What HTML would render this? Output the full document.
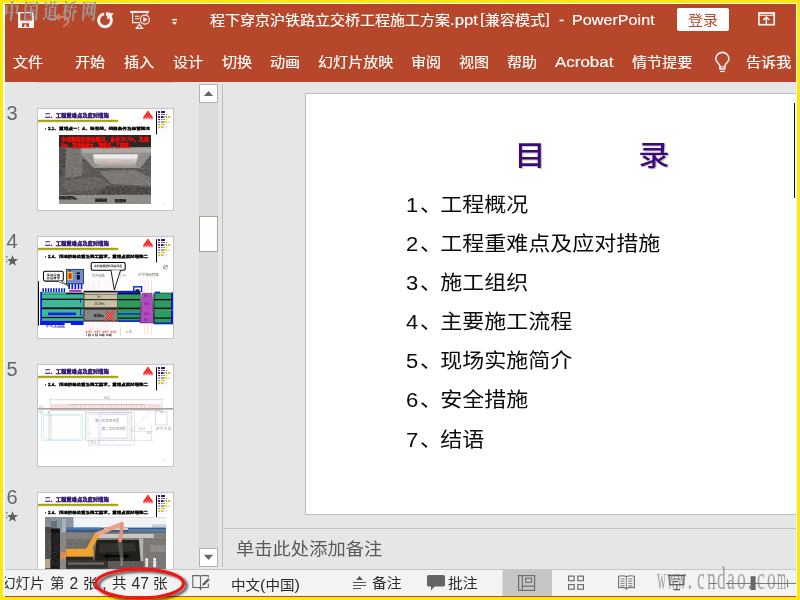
<!DOCTYPE html>
<html lang="zh-CN">
<head>
<meta charset="utf-8">
<title>PowerPoint</title>
<style>
*{box-sizing:border-box;margin:0;padding:0}
html,body{width:800px;height:600px;overflow:hidden;background:#fce80c}
body{position:relative;font-family:"Liberation Sans","Noto Sans CJK SC",sans-serif;color:#444}
#frame{position:absolute;left:3px;top:3px;width:794px;height:594px;background:#fff}
#win{position:absolute;left:5px;top:4px;width:791px;height:593px;background:#e6e6e6;overflow:hidden;will-change:transform}
#page{position:absolute;left:-5px;top:-4px;width:800px;height:600px}
#red{position:absolute;left:5px;top:4px;width:791px;height:78px;background:#b7472a}
.t{position:absolute;white-space:nowrap;line-height:1}
.yh{transform:scaleX(1.07);transform-origin:0 50%}
.w{color:#fff;-webkit-text-stroke:0.16px #fff}
.ti{top:13.4px;font-size:14.1px;transform:scaleX(1.064);transform-origin:0 50%}
.tab{top:54.5px;font-size:14.1px;transform:scaleX(1.07);transform-origin:0 50%}
#login{position:absolute;left:677px;top:8px;width:52px;height:23px;background:#fff;border-radius:2px}
svg{position:absolute;overflow:visible}
/* left panel */
.num{font-size:20px;color:#666;left:6.6px}
.thumb{position:absolute;left:37px;width:137px;height:103px;background:#fff;border:1px solid #c4c4c4;overflow:hidden}
#sb{position:absolute;left:199px;top:84px;width:19px;height:483px;background:#dcdcdc}
.sbtn{position:absolute;left:0;width:19px;height:19px;background:#fff;border:1px solid #b2b2b2}
#sthumb{position:absolute;left:0;top:132px;width:19px;height:36px;background:#fff;border:1px solid #a9a68b}
#vdiv{position:absolute;left:222px;top:84px;width:1px;height:483px;background:#bdbdbd}
/* slide */
#slide{position:absolute;left:305px;top:93px;width:500px;height:422px;background:#fff;border:1px solid #bdbdbd}
.ttl{font-weight:500;color:#3b0a78;font-size:30px;text-shadow:1.3px 1.3px 0.8px #c4c4c4;top:141px;transform:scale(1.05,0.96);transform-origin:50% 60%}
.li{font-size:22px;color:#0a0a0a;left:406px;font-weight:400;margin-top:2px;transform:scaleY(0.925);transform-origin:0 94%}
.li i{font-style:normal;position:relative;left:1.7px}
/* notes */
#ndiv{position:absolute;left:224px;top:528px;width:580px;height:1px;background:#c2c2c2}
#notes{left:236px;top:540.6px;font-size:17.2px;color:#5a5a5a;transform:scaleX(1.064);transform-origin:0 50%}
/* status bar */
#status{position:absolute;left:0;top:569px;width:800px;height:27px;background:#f3f3f3;border-top:1px solid #c6c6c6}
#sline{position:absolute;left:0;top:596px;width:800px;height:1px;background:#bd4a2b}
.st{font-size:13.6px;color:#2a2a2a;top:576.5px}
#stxt span{position:absolute;top:0;white-space:pre;transform:scaleX(1.07);transform-origin:0 50%}
#stxt .la{font-size:15.6px;top:-1px;transform:none}
#wm2{left:656.5px;top:573.1px;font-family:"Liberation Serif",serif;font-size:19px;color:rgba(105,105,105,0.58);transform:scaleY(1.62);transform-origin:0 83.7%}
#wm2 span{display:inline-block;width:10px;height:19px;vertical-align:top}
#wm2 b{display:inline-block;font-weight:normal;transform-origin:0 50%}
</style>
</head>
<body>
<div id="frame"></div>
<div id="win"><div id="page">
  <div id="red"></div>
  <!--TITLEBAR-->
  <svg id="qat" width="800" height="82" style="left:0;top:0" viewBox="0 0 800 82">
    <!-- save -->
    <rect x="18" y="12" width="16" height="16" rx="0.8" fill="#f3efee"/>
    <rect x="20.3" y="13.3" width="11.5" height="7.2" fill="#b7472a"/>
    <path d="M22 26.9V23.3H29V26.9H26.4V24.4H24.3V26.9Z" fill="#b7472a"/>
    <!-- undo (disabled) -->
    <path d="M54.3 17 L60 13.2 L60 15.9 L64 15.9 C68.5 16.2 70.2 19.2 69.2 22 C68.3 24.6 66 26.2 63.3 27.2 L62.8 25.6 C65 24.6 66.6 23.4 67 21.4 C67.3 19.4 66 18.3 63.8 18.2 L60 18.2 L60 20.8 Z" fill="#d57d68"/>
    <!-- redo / repeat -->
    <circle cx="105" cy="20.3" r="6.4" fill="none" stroke="#f6f2f1" stroke-width="3"/>
    <rect x="104.2" y="11" width="1.8" height="8.2" fill="#b7472a"/>
    <path d="M106 12.1 L113.9 13.4 L107.7 19.7 Z" fill="#f6f2f1"/>
    <!-- slideshow from start -->
    <rect x="130.1" y="10.9" width="18.9" height="2" fill="#f6f2f1"/>
    <path d="M132.6 13V22.6H147V13" fill="none" stroke="#f6f2f1" stroke-width="1.2"/>
    <path d="M135 16.3H139.7M135 18.8H139.7" stroke="#f6f2f1" stroke-width="1.1" fill="none"/>
    <path d="M139.4 23.2 L135 29 H143.8 Z" fill="#f6f2f1"/>
    <path d="M139.4 25.2 L137.6 27.4 H141.2 Z" fill="#b7472a"/>
    <circle cx="144.9" cy="19.6" r="5.7" fill="#b7472a"/>
    <circle cx="144.9" cy="19.6" r="4.5" fill="none" stroke="#f6f2f1" stroke-width="1.1"/>
    <path d="M143.3 16.9 L147.6 19.6 L143.3 22.3 Z" fill="#f6f2f1"/>
    <!-- customise -->
    <rect x="172" y="18.9" width="5" height="1.5" fill="#f6f2f1"/>
    <path d="M172 21.9 H177 L174.5 25.1 Z" fill="#f6f2f1"/>
    <!-- ribbon display options -->
    <rect x="758.9" y="13.1" width="15.3" height="11.6" fill="none" stroke="#f6f2f1" stroke-width="1.7"/>
    <rect x="758.1" y="12.3" width="16.9" height="3.5" fill="#f6f2f1"/>
    <rect x="760.2" y="13.9" width="12.7" height="0.8" fill="#b7472a"/>
    <path d="M766.3 24.6V17.6M763.3 20.1L766.3 17L769.3 20.1" fill="none" stroke="#f6f2f1" stroke-width="1.5"/>
    <!-- tell me lightbulb -->
    <path d="M719.9 66.4 C719.9 63.4 715.8 62.5 715.8 58.9 A6.55 6.55 0 0 1 728.9 58.9 C728.9 62.5 724.8 63.4 724.8 66.4" fill="none" stroke="#f8f4f3" stroke-width="1.6"/>
    <rect x="719.1" y="66.2" width="6.5" height="3.4" fill="#f8f4f3"/>
    <rect x="721" y="67.3" width="2.9" height="0.8" fill="#b7472a"/>
    <rect x="720.1" y="70.7" width="4.6" height="1.4" fill="#f8f4f3"/>
  </svg>
  <div class="t w ti" style="left:210px">程下穿京沪铁路立交桥工程施工方案</div>
  <div class="t w" style="left:450.3px;top:12.5px;font-size:14.8px;transform:scaleX(1.13);transform-origin:0 50%">.ppt</div>
  <div class="t w" style="left:480.2px;top:12.4px;font-size:14.6px">[</div>
  <div class="t w ti" style="left:484.8px">兼容模式</div>
  <div class="t w" style="left:545.4px;top:12.4px;font-size:14.6px">]</div>
  <div class="t w" style="left:559px;top:11.5px;font-size:16px">-</div>
  <div class="t w" style="left:572.2px;top:12.5px;font-size:14.8px;transform:scaleX(1.092);transform-origin:0 50%">PowerPoint</div>
  <div id="login"></div>
  <div class="t yh" style="left:687.5px;top:12.5px;font-size:14.1px;color:#b7472a">登录</div>
  <!--TABS-->
  <div class="t w tab" style="left:12.5px">文件</div>
  <div class="t w tab" style="left:74.5px">开始</div>
  <div class="t w tab" style="left:124px">插入</div>
  <div class="t w tab" style="left:173px">设计</div>
  <div class="t w tab" style="left:222px">切换</div>
  <div class="t w tab" style="left:270px">动画</div>
  <div class="t w tab" style="left:318px">幻灯片放映</div>
  <div class="t w tab" style="left:411px">审阅</div>
  <div class="t w tab" style="left:459px">视图</div>
  <div class="t w tab" style="left:506.5px">帮助</div>
  <div class="t w" style="left:555.2px;top:54.1px;font-size:15px;transform:scaleX(1.13);transform-origin:0 50%">Acrobat</div>
  <div class="t w tab" style="left:632px">情节提要</div>
  <div class="t w tab" style="left:746px">告诉我</div>
  <!--LEFTPANEL-->
  <div style="position:absolute;left:37px;top:82px;width:137px;height:1px;background:#cdcdcd"></div>
  <div class="t num" style="top:103px">3</div>
  <div class="t num" style="top:231px">4</div>
  <div class="t num" style="top:359px">5</div>
  <div class="t num" style="top:487px">6</div>
  <div class="thumb" id="th3" style="top:108px"><!--T--><svg width="137" height="103" viewBox="0 0 137 103" style="left:-1px;top:-1px;font-family:&quot;Liberation Sans&quot;,&quot;Noto Sans CJK SC&quot;,sans-serif"><g class="hd">
      <text x="8.1" y="9.15" transform="translate(0 9.15) scale(1 0.84) translate(0 -9.15)" font-size="5.3" font-weight="bold" fill="#24086e" stroke="#24086e" stroke-width="0.32" textLength="63.6" lengthAdjust="spacingAndGlyphs">二、工程重难点及应对措施</text>
      <path d="M18 9.75H71.7" stroke="#2a0a78" stroke-width="0.3" opacity="0.4"/>
      <rect x="0" y="12.7" width="81.6" height="1.6" fill="#b9b9b0" opacity="0.8"/>
      <rect x="0" y="11.8" width="81" height="1.9" fill="#a9a100"/>
      <rect x="8" y="20.1" width="1.1" height="1.3" fill="#3b1182"/>
      <text x="11" y="22.2" transform="translate(0 22.2) scale(1 0.86) translate(0 -22.2)" font-size="4.5" font-weight="bold" fill="#000" stroke="#000" stroke-width="0.3" textLength="102" lengthAdjust="spacingAndGlyphs">2.1、重难点一：A、既有线，线路条件及运营概况</text>
      <path d="M110.9 2.5 L116.2 9.8 H105.8 Z" fill="#ee1c1c"/>
      <path d="M109.3 6.2l1.4-1.6 1.4 1.6M108 8.6l1.4-1.5 1.5 1.5 1.5-1.5 1.4 1.5" stroke="#fff" stroke-width="0.45" fill="none" opacity="0.75"/>
      <path d="M106.2 10.7h2M108.8 10.7h2M111.4 10.7h2M114 10.7h2" stroke="#f04a4a" stroke-width="1.1"/>
      <rect x="119" y="3.2" width="1" height="23.2" fill="#000"/>
      <rect x="121.1" y="3.0" width="1.9" height="2" fill="#3b1182"/><rect x="124.0" y="3.0" width="4" height="2" fill="#3b1182"/><rect x="121.1" y="6.1" width="1.9" height="0.9" fill="#4a3a50"/><rect x="124.0" y="6.1" width="1.3" height="0.9" fill="#6a6420"/><rect x="125.3" y="6.1" width="1.4" height="0.9" fill="#3b1182"/><rect x="126.7" y="6.1" width="1.3" height="0.9" fill="#6a6420"/><rect x="129.0" y="6.1" width="1.2" height="0.9" fill="#8a9bb2"/><rect x="121.1" y="8.0" width="1.9" height="2" fill="#3b1182"/><rect x="124.0" y="8.0" width="2" height="2" fill="#3b1182"/><rect x="126.0" y="8.0" width="2" height="2" fill="#8a9bb2"/><rect x="129.0" y="8.0" width="1.2" height="2" fill="#8a9bb2"/><rect x="131.0" y="8.0" width="2.2" height="2" fill="#d6ca08"/><rect x="121.1" y="11.0" width="1.9" height="1" fill="#3b1182"/><rect x="124.0" y="11.0" width="4" height="1" fill="#8a9bb2"/><rect x="129.0" y="11.0" width="1.2" height="1" fill="#d6ca08"/><rect x="121.1" y="13.0" width="1.9" height="2" fill="#8a9bb2"/><rect x="124.0" y="13.0" width="2" height="2" fill="#8a9bb2"/><rect x="126.0" y="13.0" width="2" height="2" fill="#d6ca08"/><rect x="129.0" y="13.0" width="1.2" height="2" fill="#d6ca08"/><rect x="131.0" y="13.0" width="2.2" height="2" fill="#dfe0f7"/><rect x="121.1" y="16.0" width="1.9" height="1" fill="#8a9bb2"/><rect x="124.0" y="16.0" width="4" height="1" fill="#d6ca08"/><rect x="129.0" y="16.0" width="1.2" height="1" fill="#eee"/><rect x="121.1" y="18.0" width="1.9" height="2" fill="#d6ca08"/><rect x="124.0" y="18.0" width="2" height="2" fill="#d6ca08"/><rect x="126.0" y="18.0" width="2" height="2" fill="#dfe0f7"/><rect x="129.0" y="18.0" width="1.2" height="2" fill="#dfe0f7"/><rect x="124.0" y="21.0" width="2.4" height="0.8" fill="#dfe0f7"/><rect x="129.0" y="21.0" width="1.2" height="0.8" fill="#e4e4e4"/>
    </g>
  <defs>
    <linearGradient id="g3a" x1="0" y1="0" x2="0" y2="1"><stop offset="0" stop-color="#2e2a27"/><stop offset="0.18" stop-color="#3b3733"/><stop offset="0.45" stop-color="#56524e"/><stop offset="0.8" stop-color="#4c4945"/><stop offset="0.9" stop-color="#7b7874"/><stop offset="1" stop-color="#8d8a86"/></linearGradient>
    <linearGradient id="g3b" x1="0" y1="0" x2="0" y2="1"><stop offset="0" stop-color="#e4e4e2"/><stop offset="0.5" stop-color="#c9c6c2"/><stop offset="1" stop-color="#8f8a86"/></linearGradient>
    <filter id="n3" x="0" y="0" width="100%" height="100%"><feTurbulence type="fractalNoise" baseFrequency="0.35 0.5" numOctaves="2" seed="4"/><feColorMatrix values="0 0 0 0 0.5  0 0 0 0 0.5  0 0 0 0 0.5  0.9 0.9 0.9 0 -0.95"/><feComposite in2="SourceGraphic" operator="in"/></filter>
  </defs>
  <rect x="22" y="27" width="92" height="68.8" fill="url(#g3a)"/>
  <rect x="22" y="27" width="92" height="12" fill="#2d2824"/>
  <path d="M22 39 L46 41 L45 68 L22 71 Z" fill="#6f6b67"/>
  <path d="M22 39 L29 39.5 L28 69 L22 71 Z" fill="#45413d"/>
  <path d="M43 39.5 L114 39 L114 47 L103 60 L57 60 L45 48 Z" fill="#8d8a86"/>
  <path d="M45 40.6 L114 40.2 L114 44.4 L45 45 Z" fill="#a9a6a2"/>
  <path d="M55.7 46.4 L101.4 46.4 L98 59.8 L58.6 59.8 Z" fill="url(#g3b)"/>
  <path d="M57 46.6 L100.4 46.6 L99.6 50.6 L57.8 50.6 Z" fill="#f2f2f0"/>
  <path d="M60 53.5h9l3 1.6h10l6-2.6h7" stroke="#e0a8a0" stroke-width="1.2" fill="none" opacity="0.85"/>
  <path d="M58 60 L99 60 L114 68 L114 87 L22 87 L22 71 L45 68 Z" fill="#4f4c48"/>
  <path d="M62 63 L98 62 L114 70 L114 78 L74 76 Z" fill="#777470" opacity="0.9"/>
  <path d="M24 73 L58 68 L78 79 L30 84 Z" fill="#5f5c58" opacity="0.9"/>
  <path d="M70 78 L114 80 L114 86 L60 86 Z" fill="#3c3936" opacity="0.9"/>
  <rect x="22" y="87" width="92" height="8.8" fill="#8b8884"/>
  <path d="M22 88 h14 l5 3.4 h-19z M58 90.4h12v3.6H58z M78 91h11v3.4H78z" fill="#24211e"/>
  <rect x="22" y="39" width="92" height="56.8" fill="#fff" filter="url(#n3)" opacity="0.3"/>
  <rect x="58.2" y="56.2" width="1.6" height="1.6" fill="#2a8cc0"/>
  <text x="24.3" y="33.4" font-size="4.6" font-weight="bold" fill="#ff0a0a" stroke="#ff0a0a" stroke-width="0.3" textLength="87.5" lengthAdjust="spacingAndGlyphs">中线里程及桥位概况，全长38.7m，孔径</text>
  <text x="24.3" y="39.4" font-size="4.6" font-weight="bold" fill="#ff0a0a" stroke="#ff0a0a" stroke-width="0.3" textLength="72" lengthAdjust="spacingAndGlyphs">8m，顶进重量大，顶程长，工期紧。</text>
  <text x="126" y="96" font-size="1.8" fill="#888">3</text>
</svg><!--/T--></div>
  <div class="thumb" id="th4" style="top:236px"><!--T--><svg width="137" height="103" viewBox="0 0 137 103" style="left:-1px;top:-1px;font-family:&quot;Liberation Sans&quot;,&quot;Noto Sans CJK SC&quot;,sans-serif"><g class="hd">
      <text x="8.1" y="9.15" transform="translate(0 9.15) scale(1 0.84) translate(0 -9.15)" font-size="5.3" font-weight="bold" fill="#24086e" stroke="#24086e" stroke-width="0.32" textLength="63.6" lengthAdjust="spacingAndGlyphs">二、工程重难点及应对措施</text>
      <path d="M18 9.75H71.7" stroke="#2a0a78" stroke-width="0.3" opacity="0.4"/>
      <rect x="0" y="12.7" width="81.6" height="1.6" fill="#b9b9b0" opacity="0.8"/>
      <rect x="0" y="11.8" width="81" height="1.9" fill="#a9a100"/>
      <rect x="8" y="20.1" width="1.1" height="1.3" fill="#3b1182"/>
      <text x="11" y="22.2" transform="translate(0 22.2) scale(1 0.86) translate(0 -22.2)" font-size="4.5" font-weight="bold" fill="#000" stroke="#000" stroke-width="0.3" textLength="100" lengthAdjust="spacingAndGlyphs">2.4、顶进桥涵位置及施工要求，重难点应对措施二</text>
      <path d="M110.9 2.5 L116.2 9.8 H105.8 Z" fill="#ee1c1c"/>
      <path d="M109.3 6.2l1.4-1.6 1.4 1.6M108 8.6l1.4-1.5 1.5 1.5 1.5-1.5 1.4 1.5" stroke="#fff" stroke-width="0.45" fill="none" opacity="0.75"/>
      <path d="M106.2 10.7h2M108.8 10.7h2M111.4 10.7h2M114 10.7h2" stroke="#f04a4a" stroke-width="1.1"/>
      <rect x="119" y="3.2" width="1" height="23.2" fill="#000"/>
      <rect x="121.1" y="3.0" width="1.9" height="2" fill="#3b1182"/><rect x="124.0" y="3.0" width="4" height="2" fill="#3b1182"/><rect x="121.1" y="6.1" width="1.9" height="0.9" fill="#4a3a50"/><rect x="124.0" y="6.1" width="1.3" height="0.9" fill="#6a6420"/><rect x="125.3" y="6.1" width="1.4" height="0.9" fill="#3b1182"/><rect x="126.7" y="6.1" width="1.3" height="0.9" fill="#6a6420"/><rect x="129.0" y="6.1" width="1.2" height="0.9" fill="#8a9bb2"/><rect x="121.1" y="8.0" width="1.9" height="2" fill="#3b1182"/><rect x="124.0" y="8.0" width="2" height="2" fill="#3b1182"/><rect x="126.0" y="8.0" width="2" height="2" fill="#8a9bb2"/><rect x="129.0" y="8.0" width="1.2" height="2" fill="#8a9bb2"/><rect x="131.0" y="8.0" width="2.2" height="2" fill="#d6ca08"/><rect x="121.1" y="11.0" width="1.9" height="1" fill="#3b1182"/><rect x="124.0" y="11.0" width="4" height="1" fill="#8a9bb2"/><rect x="129.0" y="11.0" width="1.2" height="1" fill="#d6ca08"/><rect x="121.1" y="13.0" width="1.9" height="2" fill="#8a9bb2"/><rect x="124.0" y="13.0" width="2" height="2" fill="#8a9bb2"/><rect x="126.0" y="13.0" width="2" height="2" fill="#d6ca08"/><rect x="129.0" y="13.0" width="1.2" height="2" fill="#d6ca08"/><rect x="131.0" y="13.0" width="2.2" height="2" fill="#dfe0f7"/><rect x="121.1" y="16.0" width="1.9" height="1" fill="#8a9bb2"/><rect x="124.0" y="16.0" width="4" height="1" fill="#d6ca08"/><rect x="129.0" y="16.0" width="1.2" height="1" fill="#eee"/><rect x="121.1" y="18.0" width="1.9" height="2" fill="#d6ca08"/><rect x="124.0" y="18.0" width="2" height="2" fill="#d6ca08"/><rect x="126.0" y="18.0" width="2" height="2" fill="#dfe0f7"/><rect x="129.0" y="18.0" width="1.2" height="2" fill="#dfe0f7"/><rect x="124.0" y="21.0" width="2.4" height="0.8" fill="#dfe0f7"/><rect x="129.0" y="21.0" width="1.2" height="0.8" fill="#e4e4e4"/>
    </g><path d="M49.0 45V54.5 M49.0 86.5V94.5" stroke="#f7c4de" stroke-width="0.4"/>
<path d="M51.5 45V54.5 M51.5 86.5V94.5" stroke="#f7c4de" stroke-width="0.4"/>
<path d="M54.0 45V54.5 M54.0 86.5V94.5" stroke="#f7c4de" stroke-width="0.4"/>
<path d="M56.5 45V54.5 M56.5 86.5V94.5" stroke="#f7c4de" stroke-width="0.4"/>
<path d="M59.0 45V54.5 M59.0 86.5V94.5" stroke="#f7c4de" stroke-width="0.4"/>
<path d="M61.5 45V54.5 M61.5 86.5V94.5" stroke="#f7c4de" stroke-width="0.4"/>
<path d="M64.0 45V54.5 M64.0 86.5V94.5" stroke="#f7c4de" stroke-width="0.4"/>
<path d="M67.0 45V54.5 M67.0 86.5V94.5" stroke="#f7c4de" stroke-width="0.4"/>
<path d="M70.0 45V54.5 M70.0 86.5V94.5" stroke="#f7c4de" stroke-width="0.4"/>
<path d="M73.0 45V54.5 M73.0 86.5V94.5" stroke="#f7c4de" stroke-width="0.4"/>
<path d="M108.0 44V56 M108.0 87.5V99" stroke="#f2a6a6" stroke-width="0.4"/>
<path d="M111.0 44V56 M111.0 87.5V99" stroke="#f2a6a6" stroke-width="0.4"/>
<path d="M114.5 44V56 M114.5 87.5V99" stroke="#f2a6a6" stroke-width="0.4"/>
<path d="M83.5 30V42 M83.5 91V100" stroke="#bbb" stroke-width="0.5"/>
<rect x="1.0" y="45.2" width="1.0" height="44.4" fill="#000" />
<rect x="3.2" y="56.0" width="2.0" height="33.0" fill="#0a1cf2" />
<rect x="5.4" y="52.2" width="1.5" height="4.2" fill="#0a1cf2" />
<rect x="8.0" y="52.2" width="1.5" height="4.2" fill="#0a1cf2" />
<rect x="10.7" y="52.2" width="1.5" height="4.2" fill="#0a1cf2" />
<rect x="13.3" y="52.2" width="1.5" height="4.2" fill="#0a1cf2" />
<rect x="16.0" y="52.2" width="1.5" height="4.2" fill="#0a1cf2" />
<rect x="18.6" y="52.2" width="1.5" height="4.2" fill="#0a1cf2" />
<rect x="21.3" y="52.2" width="1.5" height="4.2" fill="#0a1cf2" />
<rect x="24.0" y="52.2" width="1.5" height="4.2" fill="#0a1cf2" />
<rect x="26.6" y="52.2" width="1.5" height="4.2" fill="#0a1cf2" />
<rect x="31.3" y="47.7" width="1.7" height="5.3" fill="#0a1cf2" />
<rect x="34.4" y="47.7" width="1.7" height="5.3" fill="#0a1cf2" />
<rect x="37.5" y="47.7" width="1.7" height="5.3" fill="#0a1cf2" />
<rect x="40.6" y="47.7" width="1.7" height="5.3" fill="#0a1cf2" />
<rect x="43.7" y="47.7" width="1.7" height="5.3" fill="#0a1cf2" />
<rect x="3.2" y="85.0" width="43.4" height="4.0" fill="#0a1cf2" />
<rect x="27.6" y="87.0" width="6.2" height="2.2" fill="#fff" />
<rect x="5.0" y="56.6" width="41.6" height="28.6" fill="#101010" />
<rect x="5.0" y="58.3" width="41.6" height="4.3" fill="#3fb79b" />
<rect x="5.0" y="64.0" width="41.6" height="7.4" fill="#3fb79b" />
<rect x="5.0" y="73.2" width="41.6" height="7.7" fill="#3fb79b" />
<rect x="5.0" y="82.2" width="41.6" height="2.7" fill="#3fb79b" />
<rect x="11.0" y="76.6" width="28.0" height="2.6" fill="#0a1cf2" />
<rect x="5.0" y="56.4" width="24.0" height="1.9" fill="#3fb79b" />
<rect x="32.2" y="53.7" width="12.4" height="2.3" fill="#a546b4" />
<path d="M43.5 62V67M43.5 73V79h2" stroke="#0a1cf2" stroke-width="0.9" fill="none"/>
<rect x="29.4" y="33.3" width="17.2" height="14.5" fill="#6b8fd6" stroke="#111" stroke-width="0.7"/>
<rect x="30.5" y="36.0" width="5.2" height="8.0" fill="#f2d21a" />
<rect x="31.5" y="37.2" width="3.1" height="5.6" fill="#e02a1a" />
<rect x="39.7" y="36.4" width="3.3" height="1.6" fill="#111" />
<rect x="39.9" y="39.0" width="2.9" height="4.6" fill="#111" />
<rect x="31.5" y="34.4" width="2.5" height="0.8" fill="#111" />
<rect x="6.5" y="35.3" width="19.8" height="9.8" rx="1.8" fill="#fff" stroke="#000" stroke-width="1.05"/>
<path d="M20 45L33 50.5L24 45" fill="#fff" stroke="#111" stroke-width="0.6"/>
<text x="9.5" y="39.60000000000002" font-size="2.6" font-weight="bold" fill="#111" textLength="13.5" lengthAdjust="spacingAndGlyphs">顶进设备</text>
<text x="9.5" y="43.39999999999998" font-size="2.6" font-weight="bold" fill="#111" textLength="13.5" lengthAdjust="spacingAndGlyphs">及后背梁</text>
<rect x="54.2" y="26.4" width="34" height="7.9" rx="1.6" fill="#fff" stroke="#000" stroke-width="1.05"/>
<path d="M74 34.30000000000001L77.3 54L83.5 34.30000000000001" fill="#fff" stroke="#000" stroke-width="0.9"/>
<text x="57" y="31.19999999999999" font-size="2.7" font-weight="bold" fill="#111" textLength="28" lengthAdjust="spacingAndGlyphs">京沪线框架桥顶进位置</text>
<text x="54.7" y="40.69999999999999" font-size="3.2" fill="#777" textLength="13" lengthAdjust="spacingAndGlyphs">京沪线路</text>
<text x="101.30000000000001" y="40.30000000000001" font-size="3.2" fill="#666" textLength="20.4" lengthAdjust="spacingAndGlyphs">沪宁城际铁路</text>
<rect x="85" y="38.4" width="4.6" height="2" fill="#d6d6d6"/>
<text x="88.3" y="96.80000000000001" font-size="3.2" fill="#888">上海</text>
<circle cx="128.3" cy="31.19999999999999" r="2" fill="none" stroke="#555" stroke-width="0.5"/><path d="M126 32.19999999999999L131 29.19999999999999" stroke="#555" stroke-width="0.5"/>
<rect x="46.6" y="54.8" width="34.0" height="1.4" fill="#111" />
<rect x="46.6" y="56.2" width="34.0" height="29.4" fill="#2b2b2b" />
<rect x="47.4" y="58.4" width="32.8" height="4.6" fill="#c9c1a3" />
<rect x="47.4" y="64.2" width="32.8" height="7.1" fill="#c9c1a3" />
<rect x="47.4" y="73.6" width="32.8" height="10.8" fill="#868686" />
<rect x="47.4" y="56.6" width="32.8" height="1.2" fill="#e8e4d6" />
<text x="60" y="62.19999999999999" font-size="2.8" fill="#a33">8m</text>
<text x="57.5" y="69.39999999999998" font-size="3.3" fill="#333" textLength="10">16.78m</text>
<text x="56.5" y="81" font-size="3.6" font-weight="bold" fill="#111" textLength="10.5" lengthAdjust="spacingAndGlyphs">主体8m</text>
<path d="M68.6 75L77 85M77 75L68.6 85" stroke="#f01a10" stroke-width="2"/>
<path d="M68.6 75L77 85M77 75L68.6 85" stroke="#f7a090" stroke-width="0.7"/>
<rect x="80.6" y="54.8" width="23.0" height="2.2" fill="#0a1cf2" />
<rect x="80.6" y="57.0" width="23.0" height="29.0" fill="#101010" />
<rect x="81.0" y="58.4" width="22.2" height="4.6" fill="#2f9a62" />
<rect x="81.0" y="64.3" width="22.2" height="7.3" fill="#2f9a62" />
<rect x="81.0" y="73.2" width="22.2" height="8.3" fill="#2f9a62" />
<rect x="81.0" y="82.7" width="22.2" height="2.9" fill="#2f9a62" />
<rect x="81.0" y="77.3" width="22.2" height="1.3" fill="#0a1cf2" />
<rect x="81.0" y="84.3" width="22.2" height="1.3" fill="#0a1cf2" />
<path d="M96.80000000000001 55V50.80000000000001H104.6V56" stroke="#0a1cf2" stroke-width="1.4" fill="none"/>
<path d="M97.5 51.10000000000002H103" stroke="#2fb89a" stroke-width="0.6"/>
<rect x="98.5" y="53.3" width="4.0" height="2.3" fill="#222" />
<polygon points="105.0,57.2 115.0,57.2 117.2,86.9 103.0,86.9" fill="#b04cc0" stroke="#222" stroke-width="0.5"/>
<text x="107" y="61.39999999999998" font-size="2.7" fill="#5a1a70">8m</text>
<text x="107" y="68.60000000000002" font-size="2.7" fill="#5a1a70">16m</text>
<text x="107" y="78.60000000000002" font-size="2.7" fill="#5a1a70">16m</text>
<text x="107" y="85.39999999999998" font-size="2.7" fill="#5a1a70">8m</text>
<rect x="116.4" y="57.0" width="18.6" height="30.4" fill="#101010" />
<rect x="117.4" y="58.0" width="16.8" height="5.0" fill="#2f9a62" />
<rect x="117.4" y="64.3" width="16.8" height="7.3" fill="#2f9a62" />
<rect x="117.4" y="73.2" width="16.8" height="8.3" fill="#2f9a62" />
<rect x="117.4" y="82.7" width="16.8" height="3.9" fill="#2f9a62" />
<rect x="116.4" y="56.4" width="19.6" height="1.2" fill="#35b597" />
<rect x="118.0" y="55.6" width="5.0" height="1.4" fill="#0a1cf2" />
<rect x="134.6" y="56.4" width="1.4" height="31.6" fill="#0a1cf2" />
<rect x="117.0" y="87.0" width="19.0" height="1.3" fill="#0a1cf2" />
<rect x="117.0" y="73.6" width="19.0" height="0.7" fill="#35b597" />
<text x="8.899999999999999" y="90.89999999999998" font-size="3.1" font-weight="bold" fill="#1616c8" textLength="19" lengthAdjust="spacingAndGlyphs">沪宁工务段</text>
<path d="M15 91.30000000000001H28" stroke="#1616c8" stroke-width="0.4"/>
<text x="47.900000000000006" y="97" font-size="2.4" font-weight="bold" fill="#d22" textLength="32" lengthAdjust="spacingAndGlyphs">上行 下行 上行  下行</text>
<text x="47.900000000000006" y="99.80000000000001" font-size="2.4" font-weight="bold" fill="#222" textLength="27" lengthAdjust="spacingAndGlyphs">Ⅰ线 Ⅱ线 Ⅲ线  Ⅳ线</text>
<text x="126" y="95.5" font-size="1.8" fill="#888">4</text></svg><!--/T--></div>
  <div class="thumb" id="th5" style="top:364px"><!--T--><svg width="137" height="103" viewBox="0 0 137 103" style="left:-1px;top:-1px;font-family:&quot;Liberation Sans&quot;,&quot;Noto Sans CJK SC&quot;,sans-serif"><g class="hd">
      <text x="8.1" y="9.15" transform="translate(0 9.15) scale(1 0.84) translate(0 -9.15)" font-size="5.3" font-weight="bold" fill="#24086e" stroke="#24086e" stroke-width="0.32" textLength="63.6" lengthAdjust="spacingAndGlyphs">二、工程重难点及应对措施</text>
      <path d="M18 9.75H71.7" stroke="#2a0a78" stroke-width="0.3" opacity="0.4"/>
      <rect x="0" y="12.7" width="81.6" height="1.6" fill="#b9b9b0" opacity="0.8"/>
      <rect x="0" y="11.8" width="81" height="1.9" fill="#a9a100"/>
      <rect x="8" y="20.1" width="1.1" height="1.3" fill="#3b1182"/>
      <text x="11" y="22.2" transform="translate(0 22.2) scale(1 0.86) translate(0 -22.2)" font-size="4.5" font-weight="bold" fill="#000" stroke="#000" stroke-width="0.3" textLength="100" lengthAdjust="spacingAndGlyphs">2.4、顶进桥涵位置及施工要求，重难点应对措施二</text>
      <path d="M110.9 2.5 L116.2 9.8 H105.8 Z" fill="#ee1c1c"/>
      <path d="M109.3 6.2l1.4-1.6 1.4 1.6M108 8.6l1.4-1.5 1.5 1.5 1.5-1.5 1.4 1.5" stroke="#fff" stroke-width="0.45" fill="none" opacity="0.75"/>
      <path d="M106.2 10.7h2M108.8 10.7h2M111.4 10.7h2M114 10.7h2" stroke="#f04a4a" stroke-width="1.1"/>
      <rect x="119" y="3.2" width="1" height="23.2" fill="#000"/>
      <rect x="121.1" y="3.0" width="1.9" height="2" fill="#3b1182"/><rect x="124.0" y="3.0" width="4" height="2" fill="#3b1182"/><rect x="121.1" y="6.1" width="1.9" height="0.9" fill="#4a3a50"/><rect x="124.0" y="6.1" width="1.3" height="0.9" fill="#6a6420"/><rect x="125.3" y="6.1" width="1.4" height="0.9" fill="#3b1182"/><rect x="126.7" y="6.1" width="1.3" height="0.9" fill="#6a6420"/><rect x="129.0" y="6.1" width="1.2" height="0.9" fill="#8a9bb2"/><rect x="121.1" y="8.0" width="1.9" height="2" fill="#3b1182"/><rect x="124.0" y="8.0" width="2" height="2" fill="#3b1182"/><rect x="126.0" y="8.0" width="2" height="2" fill="#8a9bb2"/><rect x="129.0" y="8.0" width="1.2" height="2" fill="#8a9bb2"/><rect x="131.0" y="8.0" width="2.2" height="2" fill="#d6ca08"/><rect x="121.1" y="11.0" width="1.9" height="1" fill="#3b1182"/><rect x="124.0" y="11.0" width="4" height="1" fill="#8a9bb2"/><rect x="129.0" y="11.0" width="1.2" height="1" fill="#d6ca08"/><rect x="121.1" y="13.0" width="1.9" height="2" fill="#8a9bb2"/><rect x="124.0" y="13.0" width="2" height="2" fill="#8a9bb2"/><rect x="126.0" y="13.0" width="2" height="2" fill="#d6ca08"/><rect x="129.0" y="13.0" width="1.2" height="2" fill="#d6ca08"/><rect x="131.0" y="13.0" width="2.2" height="2" fill="#dfe0f7"/><rect x="121.1" y="16.0" width="1.9" height="1" fill="#8a9bb2"/><rect x="124.0" y="16.0" width="4" height="1" fill="#d6ca08"/><rect x="129.0" y="16.0" width="1.2" height="1" fill="#eee"/><rect x="121.1" y="18.0" width="1.9" height="2" fill="#d6ca08"/><rect x="124.0" y="18.0" width="2" height="2" fill="#d6ca08"/><rect x="126.0" y="18.0" width="2" height="2" fill="#dfe0f7"/><rect x="129.0" y="18.0" width="1.2" height="2" fill="#dfe0f7"/><rect x="124.0" y="21.0" width="2.4" height="0.8" fill="#dfe0f7"/><rect x="129.0" y="21.0" width="1.2" height="0.8" fill="#e4e4e4"/>
    </g><path d="M13.0 35.7H125 M13.0 33.5V40 M125.0 33.5V40" stroke="#b8b8b8" stroke-width="0.5" fill="none"/>
<text x="66.5" y="34.60000000000002" font-size="3" fill="#999">3400</text>
<rect x="13" y="40.9" width="112" height="5.6" fill="#fdf1f1" stroke="#c9b0b0" stroke-width="0.4"/>
<path d="M15.55 40.9V46.5M18.10 40.9V46.5M20.65 40.9V46.5M23.20 40.9V46.5M25.75 40.9V46.5M28.30 40.9V46.5M30.85 40.9V46.5M33.40 40.9V46.5M35.95 40.9V46.5M38.50 40.9V46.5M41.05 40.9V46.5M43.60 40.9V46.5M46.15 40.9V46.5M48.70 40.9V46.5M51.25 40.9V46.5M53.80 40.9V46.5M56.35 40.9V46.5M58.90 40.9V46.5M61.45 40.9V46.5M64.00 40.9V46.5M66.55 40.9V46.5M69.10 40.9V46.5M71.65 40.9V46.5M74.20 40.9V46.5M76.75 40.9V46.5M79.30 40.9V46.5M81.85 40.9V46.5M84.40 40.9V46.5M86.95 40.9V46.5M89.50 40.9V46.5M92.05 40.9V46.5M94.60 40.9V46.5M97.15 40.9V46.5M99.70 40.9V46.5M102.25 40.9V46.5M104.80 40.9V46.5M107.35 40.9V46.5M109.90 40.9V46.5M112.45 40.9V46.5M115.00 40.9V46.5M117.55 40.9V46.5M120.10 40.9V46.5M122.65 40.9V46.5" stroke="#f08a8a" stroke-width="0.45"/>
<rect x="0" y="44.1" width="137" height="1.5" fill="#9c9c9c"/>
<rect x="32" y="40.2" width="76" height="0.5" fill="#c4a0a0"/>
<path d="M12.0 46.6l1.8 2.6h-3.6z M125.0 46.6l1.8 2.6h-3.6z" fill="#c8c8c8"/>
<text x="2" y="44" font-size="2.2" fill="#aaa">轨顶</text>
<text x="2" y="49.19999999999999" font-size="2.2" fill="#aaa">地面</text>
<rect x="4.5" y="50.4" width="41.2" height="25.9" fill="none" stroke="#a5e3e3" stroke-width="0.5"/>
<path d="M6.5 52.0Q9.0 50.8 13.0 51.6H37Q42.0 50.8 44.0 52.6V73Q43.0 75.4 40.0 75.4H10Q6.5 75.4 6.5 73.0Z" fill="none" stroke="#b5e6e6" stroke-width="0.5"/>
<path d="M12.0 50.4V76.3M14.0 50.4V76.3" stroke="#b0b0b0" stroke-width="0.5"/>
<rect x="48.6" y="48.5" width="45.9" height="27.8" fill="none" stroke="#bdbdbd" stroke-width="1.3" stroke-dasharray="0.6 0.5"/>
<rect x="51" y="50.6" width="41.5" height="23.6" rx="2" fill="none" stroke="#d2d2d2" stroke-width="0.5"/>
<rect x="62" y="48.5" width="35.4" height="32.5" rx="1.2" fill="none" stroke="#b3baf2" stroke-width="0.5"/>
<rect x="64" y="50.4" width="26.7" height="24" rx="2.6" fill="none" stroke="#c3c9f5" stroke-width="0.5"/>
<text x="58" y="57.60000000000002" font-size="3.6" fill="#8c8c8c" textLength="24" lengthAdjust="spacingAndGlyphs">第一次顶进范围</text>
<text x="64.8" y="66.30000000000001" font-size="3.6" fill="#8c8c8c" textLength="24" lengthAdjust="spacingAndGlyphs">第二次顶进范围</text>
<text x="52.5" y="70.5" font-size="2.4" fill="#aaa" transform="rotate(-60 53.5 70)">45°</text>
<rect x="118.5" y="47.6" width="11.5" height="13.4" fill="none" stroke="#bcbcbc" stroke-width="0.5"/>
<text x="118.5" y="65.60000000000002" font-size="3.2" fill="#999" textLength="16" lengthAdjust="spacingAndGlyphs">沪宁大堤</text>
<path d="M94.5 67.0L113.0 47.0 M94.5 67.4H116 M114.6 61.0V76.5 M94.5 76.4H116 M51.4 76.4V82M61.6 76.4V82M51.4 81.3H61.599999999999994" stroke="#c6c6c6" stroke-width="0.45" fill="none"/>
<text x="102" y="66.39999999999998" font-size="2.6" fill="#aaa">552.5</text>
<text x="109.5" y="70.19999999999999" font-size="2.6" fill="#aaa">200</text>
<text x="53" y="80.39999999999998" font-size="2.6" fill="#aaa">393.5</text>
<text x="126" y="95.5" font-size="1.8" fill="#888">5</text></svg><!--/T--></div>
  <div class="thumb" id="th6" style="top:492px"><!--T--><svg width="137" height="103" viewBox="0 0 137 103" style="left:-1px;top:-1px;font-family:&quot;Liberation Sans&quot;,&quot;Noto Sans CJK SC&quot;,sans-serif"><g class="hd">
      <text x="8.1" y="9.15" transform="translate(0 9.15) scale(1 0.84) translate(0 -9.15)" font-size="5.3" font-weight="bold" fill="#24086e" stroke="#24086e" stroke-width="0.32" textLength="63.6" lengthAdjust="spacingAndGlyphs">二、工程重难点及应对措施</text>
      <path d="M18 9.75H71.7" stroke="#2a0a78" stroke-width="0.3" opacity="0.4"/>
      <rect x="0" y="12.7" width="81.6" height="1.6" fill="#b9b9b0" opacity="0.8"/>
      <rect x="0" y="11.8" width="81" height="1.9" fill="#a9a100"/>
      <rect x="8" y="20.1" width="1.1" height="1.3" fill="#3b1182"/>
      <text x="11" y="22.2" transform="translate(0 22.2) scale(1 0.86) translate(0 -22.2)" font-size="4.5" font-weight="bold" fill="#000" stroke="#000" stroke-width="0.3" textLength="100" lengthAdjust="spacingAndGlyphs">2.4、顶进桥涵位置及施工要求，重难点应对措施二</text>
      <path d="M110.9 2.5 L116.2 9.8 H105.8 Z" fill="#ee1c1c"/>
      <path d="M109.3 6.2l1.4-1.6 1.4 1.6M108 8.6l1.4-1.5 1.5 1.5 1.5-1.5 1.4 1.5" stroke="#fff" stroke-width="0.45" fill="none" opacity="0.75"/>
      <path d="M106.2 10.7h2M108.8 10.7h2M111.4 10.7h2M114 10.7h2" stroke="#f04a4a" stroke-width="1.1"/>
      <rect x="119" y="3.2" width="1" height="23.2" fill="#000"/>
      <rect x="121.1" y="3.0" width="1.9" height="2" fill="#3b1182"/><rect x="124.0" y="3.0" width="4" height="2" fill="#3b1182"/><rect x="121.1" y="6.1" width="1.9" height="0.9" fill="#4a3a50"/><rect x="124.0" y="6.1" width="1.3" height="0.9" fill="#6a6420"/><rect x="125.3" y="6.1" width="1.4" height="0.9" fill="#3b1182"/><rect x="126.7" y="6.1" width="1.3" height="0.9" fill="#6a6420"/><rect x="129.0" y="6.1" width="1.2" height="0.9" fill="#8a9bb2"/><rect x="121.1" y="8.0" width="1.9" height="2" fill="#3b1182"/><rect x="124.0" y="8.0" width="2" height="2" fill="#3b1182"/><rect x="126.0" y="8.0" width="2" height="2" fill="#8a9bb2"/><rect x="129.0" y="8.0" width="1.2" height="2" fill="#8a9bb2"/><rect x="131.0" y="8.0" width="2.2" height="2" fill="#d6ca08"/><rect x="121.1" y="11.0" width="1.9" height="1" fill="#3b1182"/><rect x="124.0" y="11.0" width="4" height="1" fill="#8a9bb2"/><rect x="129.0" y="11.0" width="1.2" height="1" fill="#d6ca08"/><rect x="121.1" y="13.0" width="1.9" height="2" fill="#8a9bb2"/><rect x="124.0" y="13.0" width="2" height="2" fill="#8a9bb2"/><rect x="126.0" y="13.0" width="2" height="2" fill="#d6ca08"/><rect x="129.0" y="13.0" width="1.2" height="2" fill="#d6ca08"/><rect x="131.0" y="13.0" width="2.2" height="2" fill="#dfe0f7"/><rect x="121.1" y="16.0" width="1.9" height="1" fill="#8a9bb2"/><rect x="124.0" y="16.0" width="4" height="1" fill="#d6ca08"/><rect x="129.0" y="16.0" width="1.2" height="1" fill="#eee"/><rect x="121.1" y="18.0" width="1.9" height="2" fill="#d6ca08"/><rect x="124.0" y="18.0" width="2" height="2" fill="#d6ca08"/><rect x="126.0" y="18.0" width="2" height="2" fill="#dfe0f7"/><rect x="129.0" y="18.0" width="1.2" height="2" fill="#dfe0f7"/><rect x="124.0" y="21.0" width="2.4" height="0.8" fill="#dfe0f7"/><rect x="129.0" y="21.0" width="1.2" height="0.8" fill="#e4e4e4"/>
    </g><defs><filter id="n6" x="0" y="0" width="100%" height="100%"><feTurbulence type="fractalNoise" baseFrequency="0.4 0.55" numOctaves="2" seed="9"/><feColorMatrix values="0 0 0 0 0.5  0 0 0 0 0.5  0 0 0 0 0.5  0.9 0.9 0.9 0 -0.95"/><feComposite in2="SourceGraphic" operator="in"/></filter>
<linearGradient id="g6a" x1="0" y1="0" x2="0" y2="1"><stop offset="0" stop-color="#6e6a66"/><stop offset="1" stop-color="#56524e"/></linearGradient></defs>
<rect x="8.0" y="25.2" width="121.0" height="62.8" fill="url(#g6a)" />
<rect x="36.0" y="25.2" width="93.0" height="10.8" fill="#f1f3f5" />
<rect x="115.0" y="32.4" width="14.0" height="3.6" fill="#c3ced6" />
<rect x="8.0" y="25.2" width="28.5" height="15.8" fill="#8a96a2" />
<rect x="8.0" y="25.2" width="6.0" height="62.8" fill="#4a4846" />
<rect x="8.0" y="25.2" width="6.0" height="9.8" fill="#8b8e90" />
<rect x="14.0" y="29.0" width="6.0" height="8.0" fill="#66717a" />
<rect x="25.0" y="27.0" width="4.0" height="13.0" fill="#aab2b9" />
<rect x="14.0" y="36.5" width="9.0" height="51.5" fill="#121212" />
<rect x="23.0" y="41.0" width="6.5" height="47.0" fill="#858380" />
<rect x="8.0" y="67.0" width="5.0" height="9.0" fill="#bfa282" />
<rect x="29.0" y="35.6" width="100.0" height="4.8" fill="#3b5c88" />
<rect x="29.0" y="35.6" width="35.0" height="2.0" fill="#4d79ab" />
<rect x="91.0" y="37.4" width="38.0" height="2.0" fill="#6289ad" />
<rect x="67.0" y="36.0" width="24.0" height="2.0" fill="#c9d0d6" />
<rect x="29.0" y="40.4" width="100.0" height="7.1" fill="#7e7b77" />
<rect x="60.0" y="42.0" width="56.7" height="4.0" fill="#c9c7c3" />
<rect x="29.0" y="47.5" width="30.0" height="9.5" fill="#6a6662" />
<rect x="102.0" y="46.5" width="4.5" height="23.5" fill="#b4b1ad" />
<rect x="106.5" y="48.0" width="22.5" height="40.0" fill="#76726e" />
<rect x="113.0" y="53.0" width="16.0" height="7.0" fill="#8a8682" />
<rect x="29.0" y="69.0" width="77.5" height="19.0" fill="#55514d" />
<rect x="8.0" y="41.0" width="121.0" height="47.0" fill="#fff" filter="url(#n6)" opacity="0.22"/>
<polygon points="59.5,48.0 102.0,48.0 103.5,69.0 57.5,69.0" fill="#22201e"/>
<polygon points="63.0,51.5 97.0,51.0 99.5,59.0 61.5,61.0" fill="#33302d"/>
<path d="M66 64L71.5 61.299999999999955V63.10000000000002H87.5V61.299999999999955L93 64L87.5 66.70000000000005V64.89999999999998H71.5V66.70000000000005Z" fill="#050505"/>
<rect x="29.0" y="68.5" width="42.0" height="8.1" fill="#353330" />
<rect x="31.0" y="70.5" width="36.0" height="2.1" fill="#6f6c68" />
<polygon points="29.0,57.0 56.6,56.6 56.6,64.8 29.0,64.8" fill="#f0a22e"/>
<rect x="23.5" y="60.0" width="6.5" height="7.0" fill="#e08a50" />
<rect x="29.0" y="64.8" width="27.0" height="3.8" fill="#2a2826" />
<polygon points="49.0,57.0 58.5,40.5 62.5,42.5 54.5,58.0" fill="#f3a334"/>
<polygon points="58.0,40.8 85.4,29.6 86.6,33.2 61.6,44.0" fill="#f0a083"/>
<polygon points="83.6,30.0 87.0,31.0 84.6,51.0 81.2,50.6" fill="#e9917a"/>
<polygon points="80.6,50.0 85.4,50.0 86.4,68.0 83.4,68.0" fill="#55534f"/>
<rect x="83.6" y="66.0" width="2.0" height="8.0" fill="#8a8885" />
<circle cx="109.6" cy="67.60000000000002" r="1.5" fill="#f4f4f4"/><rect x="108.4" y="69" width="2.6" height="6" fill="#e4e4e2"/>
<circle cx="117.6" cy="67.20000000000005" r="1.5" fill="#f4f4f4"/><rect x="116.2" y="68.60000000000002" width="3" height="6.6" fill="#e8e8e6"/></svg><!--/T--></div>
  <svg id="stars" width="800" height="600" style="left:0;top:0" viewBox="0 0 800 600"><polygon points="12.50,255.10 13.88,259.10 18.11,259.18 14.73,261.73 15.97,265.77 12.50,263.35 9.03,265.77 10.27,261.73 6.89,259.18 11.12,259.10" fill="#5c5c5c"/><path d="M6 256.7h1.6M6 261.6h1.4" stroke="#5c5c5c" stroke-width="1"/><polygon points="12.50,511.10 13.88,515.10 18.11,515.18 14.73,517.73 15.97,521.77 12.50,519.35 9.03,521.77 10.27,517.73 6.89,515.18 11.12,515.10" fill="#5c5c5c"/><path d="M6 512.7h1.6M6 517.6h1.4" stroke="#5c5c5c" stroke-width="1"/></svg>
  <div id="sb"><div class="sbtn" style="top:0"></div><div id="sthumb"></div><div class="sbtn" style="top:464px"></div></div>
  <div id="vdiv"></div>
  <!--SLIDE-->
  <div id="slide"></div>
  <div class="t ttl" style="left:515px">目</div>
  <div class="t ttl" style="left:639px">录</div>
  <div class="t li" style="top:192px">1<i>、</i>工程概况</div>
  <div class="t li" style="top:231px">2<i>、</i>工程重难点及应对措施</div>
  <div class="t li" style="top:270px">3<i>、</i>施工组织</div>
  <div class="t li" style="top:309px">4<i>、</i>主要施工流程</div>
  <div class="t li" style="top:348px">5<i>、</i>现场实施简介</div>
  <div class="t li" style="top:387px">6<i>、</i>安全措施</div>
  <div class="t li" style="top:427px">7<i>、</i>结语</div>
  <div style="position:absolute;left:794px;top:103px;width:1px;height:95px;background:#111"></div>
  <!--NOTES-->
  <div id="ndiv"></div>
  <div class="t" id="notes">单击此处添加备注</div>
  <!--STATUS-->
  <div id="status"></div>
  <div class="t st" id="stxt" style="left:1.3px;width:180px;height:16px"><span style="left:0">幻灯片 </span><span style="left:48.9px">第 </span><span class="la" style="left:68.3px">2 </span><span style="left:82px">张</span><span class="la" style="left:100.9px">, </span><span style="left:110.8px">共 </span><span class="la" style="left:130.2px">47 </span><span style="left:151.7px">张</span></div>
  <div class="t st yh" style="left:231px">中文<span style="font-size:15px">(</span>中国<span style="font-size:15px">)</span></div>
  <div class="t st yh" style="left:371.6px;transform:scaleX(1.09)">备注</div>
  <div class="t st yh" style="left:447.8px;transform:scaleX(1.09)">批注</div>
  <div id="sline"></div>
  <svg id="sticons" width="800" height="600" style="left:0;top:0" viewBox="0 0 800 600">
    <!-- scrollbar arrows -->
    <path d="M203.9 96 L208.5 91 L213.1 96 Z" fill="#666"/>
    <path d="M203.9 554.8 L213.1 554.8 L208.5 560 Z" fill="#666"/>
    <!-- spelling / book icon -->
    <path d="M200.5 576.4 L199.4 575.6 H192.8 V587.5 H199.4 L200.5 589.4 L201.6 587.5 H208.3 V583.4 M200.5 576.4 L201.6 575.6 H208.3 V577.6 M200.5 576.4 V589.2" fill="none" stroke="#666" stroke-width="1.1"/>
    <path d="M202.1 585.7 L203 583.3 L208.3 578 L210 579.7 L204.6 585 Z" fill="#5e5e5e"/>
    <path d="M207.2 577.9 L210.1 580.8" stroke="#f3f3f3" stroke-width="0.5"/>
    <!-- notes icon -->
    <path d="M356.2 580 L359.5 576 L362.8 580 Z" fill="#555"/>
    <path d="M353 582.5H366M353 585.5H366M353 588.5H361" stroke="#555" stroke-width="1.1"/>
    <!-- comments icon -->
    <path d="M428.6 575 H443.4 Q445 575 445 576.6 V584.9 Q445 586.5 443.4 586.5 H434.6 L431 590.6 V586.5 H428.6 Q427 586.5 427 584.9 V576.6 Q427 575 428.6 575 Z" fill="#646464"/>
    <!-- normal view (selected) -->
    <rect x="502.5" y="570" width="49.5" height="26" fill="#c6c6c6"/>
    <rect x="518.6" y="575.6" width="16" height="14.8" fill="none" stroke="#6e6e6e" stroke-width="1.2"/>
    <path d="M522.3 575.6V590.4M522.3 586.2H534.6" stroke="#6e6e6e" stroke-width="1.2" fill="none"/>
    <rect x="525.6" y="578.3" width="6" height="4" fill="none" stroke="#6e6e6e" stroke-width="1.1"/>
    <!-- slide sorter -->
    <g fill="none" stroke="#6e6e6e" stroke-width="1.2">
      <rect x="568.6" y="576.1" width="5.6" height="4.6"/><rect x="577.8" y="576.1" width="5.6" height="4.6"/>
      <rect x="568.6" y="584.6" width="5.6" height="4.6"/><rect x="577.8" y="584.6" width="5.6" height="4.6"/>
    </g>
    <!-- reading view -->
    <path d="M618.6 576.2 Q622.5 575 626.3 576.6 Q630.2 575 634.4 576.2 V587.8 Q630.2 586.8 626.3 588.3 Q622.5 586.8 618.6 587.8 Z" fill="none" stroke="#6e6e6e" stroke-width="1.1"/>
    <path d="M626.4 576.6V590 M620.6 579H624.6M620.6 581.3H624.6M620.6 583.6H624.6M620.6 585.8H624.6 M628.2 579H632.4M628.2 581.3H632.4M628.2 583.6H632.4M628.2 585.8H632.4" stroke="#6e6e6e" stroke-width="0.9" fill="none"/>
    <!-- slideshow -->
    <path d="M668 575.5H685.5" stroke="#5a5a5a" stroke-width="1.6"/>
    <path d="M669.8 576.5V584.6H683.8V576.5 M673 579H680.6M673 581.6H678 M676.8 584.6V589.6 M673.6 589.6H680" fill="none" stroke="#5a5a5a" stroke-width="1.1"/>
    <!-- zoom slider -->
    <path d="M709 583.5H717 M726 583.5H796 M783.5 583.5H791.5 M787.5 579.5V587.5" stroke="#7a7a7a" stroke-width="1" fill="none"/>
    <rect x="750.6" y="576.2" width="5" height="13.8" fill="#666"/>
  </svg>
  
</div></div>
<div id="ov" style="position:absolute;left:0;top:0;width:800px;height:600px;overflow:hidden;pointer-events:none;will-change:transform">
  <div class="t" id="wm1" style="left:3.5px;top:3.6px;font-family:'Liberation Serif','Noto Serif CJK SC',serif;font-weight:700;font-size:15.5px;letter-spacing:3.8px;color:rgba(156,158,160,0.96);transform:scaleY(1.36) skewX(-5deg);transform-origin:0 50%">中国道桥网</div>
  <div class="t" id="wm2"><span><b style="transform:scaleX(0.66)">w</b></span><span><b style="transform:scaleX(0.66)">w</b></span><span><b style="transform:scaleX(0.66)">w</b></span><span><b style="margin-left:1px">.</b></span><span><b style="transform:scaleX(0.92)">c</b></span><span><b style="transform:scaleX(0.92)">n</b></span><span><b style="transform:scaleX(0.92)">d</b></span><span><b style="transform:scaleX(0.92)">a</b></span><span><b style="transform:scaleX(0.92)">o</b></span><span><b style="margin-left:1px">.</b></span><span><b style="transform:scaleX(0.92)">c</b></span><span><b style="transform:scaleX(0.92)">o</b></span><span><b style="transform:scaleX(0.62)">m</b></span></div>
  <svg id="ring" width="800" height="600" style="left:0;top:0" viewBox="0 0 800 600">
    <defs><filter id="rsh" x="-20%" y="-40%" width="140%" height="180%"><feGaussianBlur in="SourceAlpha" stdDeviation="1.2"/><feOffset dx="2.6" dy="2.2"/><feComponentTransfer><feFuncA type="linear" slope="0.62"/></feComponentTransfer><feMerge><feMergeNode/><feMergeNode in="SourceGraphic"/></feMerge></filter></defs>
    <ellipse cx="139.6" cy="583.6" rx="43.9" ry="14.5" fill="none" stroke="#f01212" stroke-width="3.2" filter="url(#rsh)"/>
  </svg>
</div>
</body>
</html>
